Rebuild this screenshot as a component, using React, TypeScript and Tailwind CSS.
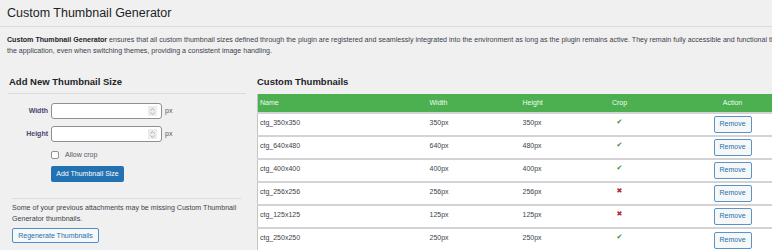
const rows = [
  { name: "ctg_350x350", w: "350px", h: "350px", crop: true },
  { name: "ctg_640x480", w: "640px", h: "480px", crop: true },
  { name: "ctg_400x400", w: "400px", h: "400px", crop: true },
  { name: "ctg_256x256", w: "256px", h: "256px", crop: false },
  { name: "ctg_125x125", w: "125px", h: "125px", crop: false },
  { name: "ctg_250x250", w: "250px", h: "250px", crop: true },
];

function NumberInput() {
  return (
    <div className="relative w-[111px] h-[16px] bg-white border border-[#8c8f94] rounded-[3px]">
      <div className="absolute right-[4px] top-[2px] w-[9px] h-[10px] bg-[#ececec] flex flex-col items-center justify-center gap-[1px]">
        <svg width="5" height="3" viewBox="0 0 5 3"><path d="M0.5 2.5 L2.5 0.5 L4.5 2.5" fill="none" stroke="#a0a0a0" strokeWidth="0.8" /></svg>
        <svg width="5" height="3" viewBox="0 0 5 3"><path d="M0.5 0.5 L2.5 2.5 L4.5 0.5" fill="none" stroke="#a0a0a0" strokeWidth="0.8" /></svg>
      </div>
    </div>
  );
}

export default function App() {
  return (
    <div className="w-[772px] h-[250px] overflow-hidden bg-[#f0f0f1] text-[#3c434a]" style={{ fontFamily: '"Liberation Sans", Arial, sans-serif' }}>
      <div className="w-[820px]">
        <div className="h-[27px] border-b border-[#dcdcde] pl-[7px] pt-[6px]">
          <h1 className="text-[12.5px] leading-[15px] text-[#1d2327]">Custom Thumbnail Generator</h1>
        </div>

        <p className="mt-[8px] pl-[7px] text-[7.1px] leading-[11px] whitespace-nowrap">
          <b className="text-[#1d2327]">Custom Thumbnail Generator</b> ensures that all custom thumbnail sizes defined through the plugin are registered and seamlessly integrated into the environment as long as the plugin remains active. They remain fully accessible and functional throughout
          <br />
          the application, even when switching themes, providing a consistent image handling.
        </p>

        <div className="flex mt-[18px] pl-[8px] gap-[11px]">
          {/* left column */}
          <div className="w-[238px] shrink-0">
            <h2 className="pl-[1px] h-[19px] pt-[1px] border-b border-[#dcdcde] text-[9.5px] leading-[12px] font-bold text-[#1d2327]">Add New Thumbnail Size</h2>

            <div className="pt-[9px] flex flex-col gap-[7px]">
              {["Width", "Height"].map(l => (
                <div key={l} className="flex items-center">
                  <span className="w-[43px] pr-[3px] text-right text-[7px] font-bold text-[#4b4670]">{l}</span>
                  <NumberInput />
                  <span className="ml-[3px] text-[7px] text-[#50575e]">px</span>
                </div>
              ))}
            </div>

            <label className="flex items-center h-[10px] mt-[8px] ml-[43px] gap-[6px] text-[7px] leading-[10px] text-[#50575e]">
              <span className="w-[8px] h-[8px] bg-white border border-[#8c8f94] rounded-[2px]" />
              Allow crop
            </label>

            <button className="block mt-[6px] ml-[43px] w-[73px] h-[16px] bg-[#2271b1] rounded-[2px] text-white text-[7px] leading-[16px]">Add Thumbnail Size</button>

            <div className="mt-[16px] ml-[4px] w-[229px] border-t border-[#dcdcde] pt-[4px]">
              <p className="text-[7.1px] leading-[10.5px]">Some of your previous attachments may be missing Custom Thumbnail Generator thumbnails.</p>
              <button className="block mt-[4px] w-[87px] h-[15px] border border-[#4d8ecb] bg-[#f6f7f7] rounded-[2px] text-[#2271b1] text-[7px] leading-[13px]">Regenerate Thumbnails</button>
            </div>
          </div>

          {/* right column */}
          <div className="flex-1">
            <h2 className="h-[19px] pt-[1px] text-[9.5px] leading-[12px] font-bold text-[#1d2327]">Custom Thumbnails</h2>
            <table className="border-l border-[#c3c4c7] border-collapse text-[7px] text-left">
              <thead>
                <tr className="bg-[#4caf50] text-[#eefbee] h-[19px]">
                  <th className="w-[170px] px-[2px] font-normal">Name</th>
                  <th className="w-[93px] px-[2px] font-normal">Width</th>
                  <th className="w-[50px] px-[2px] font-normal">Height</th>
                  <th className="w-[98px] px-[2px] font-normal text-center">Crop</th>
                  <th className="w-[128px] px-[2px] font-normal text-center">Action</th>
                </tr>
              </thead>
              <tbody>
                {rows.map(r => (
                  <tr key={r.name} className="bg-white h-[23px] border-t-2 border-[#d3d3d5]">
                    <td className="px-[2px] align-top pt-[4px]">{r.name}</td>
                    <td className="px-[2px] align-top pt-[4px]">{r.w}</td>
                    <td className="px-[2px] align-top pt-[4px]">{r.h}</td>
                    <td className="px-[2px] align-top pt-[3px] text-center">
                      {r.crop
                        ? <span className="text-[#3d8b2f] text-[7px]" style={{ fontFamily: '"DejaVu Sans", sans-serif' }}>✔</span>
                        : <span className="text-[#b32d2e] text-[7px]" style={{ fontFamily: '"DejaVu Sans", sans-serif' }}>✖</span>}
                    </td>
                    <td className="px-[2px] py-[2px] text-center">
                      <button className="w-[38px] h-[17px] border border-[#5a93c8] bg-[#f6f7f7] rounded-[2px] text-[#2271b1] text-[7px]">Remove</button>
                    </td>
                  </tr>
                ))}
              </tbody>
            </table>
          </div>
        </div>
      </div>
    </div>
  );
}
